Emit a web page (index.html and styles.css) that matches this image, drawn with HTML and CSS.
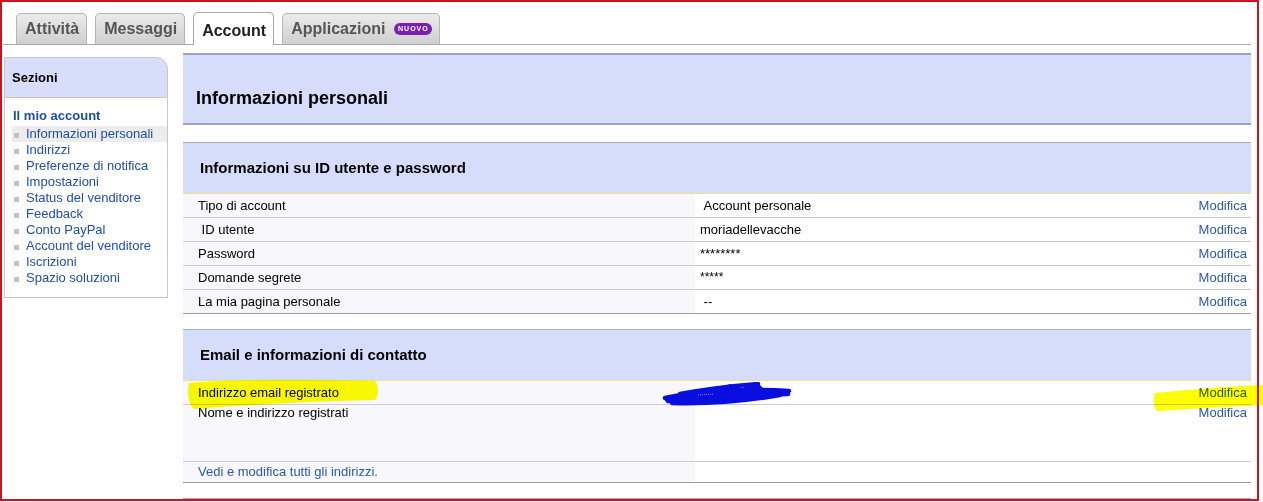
FILE: index.html
```html
<!DOCTYPE html>
<html lang="it">
<head>
    <meta charset="UTF-8">
    <title>Il mio account - Informazioni personali</title>
    <link rel="stylesheet" href="styles.css">
</head>
<body>
<div class="frame">

    <!-- Schede -->
    <div class="tabs">
        <div class="tab">Attività</div>
        <div class="tab">Messaggi</div>
        <div class="tab active">Account</div>
        <div class="tab">Applicazioni <span class="badge">NUOVO</span></div>
    </div>

    <div class="page">
        <!-- Menu laterale -->
        <div class="sidebar">
            <div class="side-head">Sezioni</div>
            <div class="side-body">
                <div class="side-title">Il mio account</div>
                <ul class="side-list">
                    <li class="current"><a href="#">Informazioni personali</a></li>
                    <li><a href="#">Indirizzi</a></li>
                    <li><a href="#">Preferenze di notifica</a></li>
                    <li><a href="#">Impostazioni</a></li>
                    <li><a href="#">Status del venditore</a></li>
                    <li><a href="#">Feedback</a></li>
                    <li><a href="#">Conto PayPal</a></li>
                    <li><a href="#">Account del venditore</a></li>
                    <li><a href="#">Iscrizioni</a></li>
                    <li><a href="#">Spazio soluzioni</a></li>
                </ul>
            </div>
        </div>

        <!-- Contenuto -->
        <div class="main">
            <h1 class="page-title">Informazioni personali</h1>

            <div class="section">
                <h2 class="section-title">Informazioni su ID utente e password</h2>
                <div class="row">
                    <div class="label">Tipo di account</div>
                    <div class="value">&nbsp;Account personale</div>
                    <div class="action"><a href="#">Modifica</a></div>
                </div>
                <div class="row">
                    <div class="label">&nbsp;ID utente</div>
                    <div class="value">moriadellevacche</div>
                    <div class="action"><a href="#">Modifica</a></div>
                </div>
                <div class="row">
                    <div class="label">Password</div>
                    <div class="value">********</div>
                    <div class="action"><a href="#">Modifica</a></div>
                </div>
                <div class="row">
                    <div class="label">Domande segrete</div>
                    <div class="value stars">*****</div>
                    <div class="action"><a href="#">Modifica</a></div>
                </div>
                <div class="row last">
                    <div class="label">La mia pagina personale</div>
                    <div class="value">&nbsp;--</div>
                    <div class="action"><a href="#">Modifica</a></div>
                </div>
            </div>

            <div class="section">
                <h2 class="section-title">Email e informazioni di contatto</h2>
                <div class="row marked">
                    <div class="label">Indirizzo email registrato</div>
                    <div class="value"></div>
                    <div class="action"><a href="#">Modifica</a></div>

                    <!-- segni a mano sopra lo screenshot -->
                    <svg class="mark mark-label" width="192" height="32" viewBox="0 0 192 32">
                        <path d="M2 4 C40 0 120 0 188 2 C192 8 192 16 188 21 C130 22 60 26 8 30 C1 28 0 12 2 4 Z" fill="#ffff00"/>
                    </svg>
                    <svg class="mark mark-action" width="110" height="28" viewBox="0 0 110 28">
                        <path d="M2 10 C30 7 70 4 110 2 L110 22 C70 24 30 26 4 28 C0 22 0 16 2 10 Z" fill="#ffff00"/>
                    </svg>
                    <svg class="scribble" width="132" height="24" viewBox="0 0 132 24">
                        <path d="M2 16 C20 10 40 8 55 7 L68 2 L80 6 L96 1 L102 7 L130 9 L122 13 L92 15 C70 19 50 22 20 22 C8 22 2 20 2 16 Z" fill="#0a0fe0"/>
                        <g fill="none" stroke="#0a0fe0" stroke-width="4.5" stroke-linecap="round" stroke-linejoin="round">
                            <path d="M3 16 C30 10 70 6 127 9"/>
                            <path d="M6 19 C40 16 80 13 126 12"/>
                            <path d="M18 12 C40 8 70 4 96 2"/>
                            <path d="M10 21 C50 22 90 18 118 13"/>
                        </g>
                        <path d="M36 13 L52 12" stroke="#8a8ab0" stroke-width="1" stroke-dasharray="1 1"/>
                    </svg>
                </div>
                <div class="row tall">
                    <div class="label">Nome e indirizzo registrati</div>
                    <div class="value"></div>
                    <div class="action"><a href="#">Modifica</a></div>
                </div>
                <div class="row link-row last">
                    <div class="label"><a href="#">Vedi e modifica tutti gli indirizzi.</a></div>
                    <div class="value"></div>
                    <div class="action"></div>
                </div>
            </div>

            <div class="section next"></div>
        </div>
    </div>

</div>
</body>
</html>
```

FILE: styles.css
```css
* {
    margin: 0;
    padding: 0;
    box-sizing: border-box;
}

body {
    font-family: "Liberation Sans", Arial, sans-serif;
    font-size: 13px;
    color: #000;
    background: #fff;
}

a {
    color: #2a5aa8;
    text-decoration: none;
}

/* Cornice rossa */
.frame {
    width: 1259px;
    height: 501px;
    border: 2px solid #c8141e;
}

/* Schede */
.tabs {
    display: flex;
    align-items: flex-end;
    gap: 8px;
    height: 43px;
    margin: 0 6px 0 1px;
    padding-left: 13px;
    border-bottom: 1px solid #a9a9a9;
}

.tab {
    display: flex;
    align-items: center;
    gap: 9px;
    height: 31px;
    padding: 0 7px 0 8px;
    border: 1px solid #b5b5b5;
    border-bottom: none;
    border-radius: 5px 5px 0 0;
    background: linear-gradient(#ebebeb, #cfcfcf);
    color: #555;
    font-size: 16px;
    font-weight: bold;
    line-height: 30px;
}

.tab.active {
    height: 33px;
    padding-top: 4px;
    margin-bottom: -1px;
    background: #fff;
    border-color: #a9a9a9;
    color: #222;
}

.badge {
    display: inline-block;
    width: 38px;
    height: 12px;
    border-radius: 6px;
    background: #7a1fb5;
    color: #fff;
    font-size: 7px;
    font-weight: bold;
    letter-spacing: 1px;
    line-height: 12px;
    text-align: center;
}

/* Corpo pagina */
.page {
    display: flex;
    align-items: flex-start;
    gap: 15px;
    margin-top: 8px;
    padding-left: 2px;
}

.sidebar {
    width: 164px;
    margin-top: 4px;
}

.side-head {
    height: 41px;
    padding-left: 7px;
    border: 1px solid #c6c6c6;
    border-radius: 0 12px 0 0;
    background: #d6def9;
    font-weight: bold;
    line-height: 39px;
}

.side-body {
    height: 200px;
    padding: 10px 0 0 0;
    border: 1px solid #c6c6c6;
    border-top: none;
}

.side-title {
    padding-left: 8px;
    margin-bottom: 2px;
    color: #1e4e9f;
    font-weight: bold;
    line-height: 16px;
}

.side-list {
    list-style: none;
    margin-left: 7px;
}

.side-list li {
    position: relative;
    padding-left: 14px;
    line-height: 16px;
}

.side-list li::before {
    content: "";
    position: absolute;
    left: 2px;
    top: 7px;
    width: 5px;
    height: 5px;
    background: #c2c2c2;
}

.side-list li.current {
    background: #ececec;
}

.side-list a {
    color: #1f50a3;
}

/* Contenuto */
.main {
    width: 1068px;
}

.page-title {
    height: 72px;
    padding: 32px 0 0 13px;
    border-top: 2px solid #9ea2c8;
    border-bottom: 2px solid #9ea2c8;
    background: #d5ddfb;
    font-size: 18px;
    line-height: 22px;
}

.section {
    margin-top: 17px;
}

.section + .section {
    margin-top: 15px;
}

.section-title {
    height: 52px;
    padding-left: 17px;
    border-top: 1px solid #a9abbb;
    border-bottom: 1px solid #f2e08a;
    background: #d5ddfb;
    font-size: 15px;
    line-height: 50px;
}

.row {
    display: grid;
    grid-template-columns: 512px 1fr auto;
    height: 24px;
    border-bottom: 1px solid #cccccc;
    line-height: 23px;
}

.row.last {
    border-bottom-color: #9c9c9c;
}

.label {
    padding-left: 15px;
    background: #f7f7fc;
}

.value {
    padding-left: 5px;
}

.value.stars {
    font-size: 12px;
}

.action {
    padding-right: 4px;
    text-align: right;
}

.row.tall {
    height: 57px;
    line-height: 16px;
}

.row.link-row {
    height: 21px;
    line-height: 20px;
}

.section.next {
    height: 4px;
    border-top: 1px solid #a9abbb;
}

/* Evidenziatore e scarabocchio sopra lo screenshot */
.row.marked {
    position: relative;
}

.mark {
    position: absolute;
    mix-blend-mode: multiply;
}

.mark-label {
    left: 4px;
    top: -2px;
}

.mark-action {
    left: 970px;
    top: 2px;
}

.scribble {
    position: absolute;
    left: 479px;
    top: 1px;
}
```
